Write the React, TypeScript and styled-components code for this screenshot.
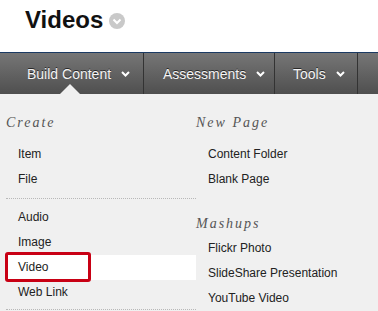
import styled, { createGlobalStyle } from 'styled-components';

const GlobalStyle = createGlobalStyle`
  body {
    margin: 0;
    background: #ffffff;
    font-family: 'Liberation Sans', Arial, sans-serif;
  }
`;

function Chevron({ color = '#ffffff' }: { color?: string }) {
  return (
    <svg width="9" height="6" viewBox="0 0 9 6">
      <polyline points="1,1 4.5,4.5 8,1" fill="none" stroke={color} strokeWidth="2" />
    </svg>
  );
}

function TitleMenuIcon() {
  return (
    <svg width="16" height="16" viewBox="0 0 16 16">
      <circle cx="8" cy="8" r="8" fill="#c9c9c9" />
      <polyline points="4.5,6.5 8,10 11.5,6.5" fill="none" stroke="#ffffff" strokeWidth="2" />
    </svg>
  );
}

const tabs = [
  { label: 'Build Content', width: 144, pad: 27, active: true },
  { label: 'Assessments', width: 131, pad: 19 },
  { label: 'Tools', width: 83, pad: 18 },
];

export default function App() {
  return (
    <Page>
      <GlobalStyle />
      <Header>
        <Title>Videos</Title>
        <TitleMenuIcon />
      </Header>
      <NavBar>
        {tabs.map((tab) => (
          <NavItem key={tab.label} $width={tab.width} $pad={tab.pad}>
            <NavLabel>{tab.label}</NavLabel>
            <Chevron />
            {tab.active && <ActiveCaret />}
          </NavItem>
        ))}
        <NavFiller />
      </NavBar>
      <MenuPanel>
        <Column $width={190}>
          <GroupHeading $top={19} $bottom={9}>Create</GroupHeading>
          <MenuItem>Item</MenuItem>
          <MenuItem>File</MenuItem>
          <Divider />
          <MenuItem>Audio</MenuItem>
          <MenuItem>Image</MenuItem>
          <MenuItem $selected>Video</MenuItem>
          <MenuItem>Web Link</MenuItem>
          <Divider $top={4} />
        </Column>
        <Column>
          <GroupHeading $top={19} $bottom={9}>New Page</GroupHeading>
          <MenuItem>Content Folder</MenuItem>
          <MenuItem>Blank Page</MenuItem>
          <GroupHeading $top={22} $bottom={2}>Mashups</GroupHeading>
          <MenuItem>Flickr Photo</MenuItem>
          <MenuItem>SlideShare Presentation</MenuItem>
          <MenuItem>YouTube Video</MenuItem>
        </Column>
      </MenuPanel>
    </Page>
  );
}

const Page = styled.div`
  width: 378px;
  height: 311px;
  overflow: hidden;
`;

const Header = styled.div`
  display: flex;
  align-items: flex-start;
  gap: 6px;
  height: 52px;
  padding: 6px 0 0 25px;
  box-sizing: border-box;

  svg {
    margin-top: 7px;
  }
`;

const Title = styled.h1`
  margin: 0;
  font-size: 24px;
  line-height: 28px;
  font-weight: bold;
  color: #111111;
`;

const NavBar = styled.div`
  display: flex;
  height: 41px;
  border-top: 1px solid #1b3a63;
  background: linear-gradient(#767676, #4f4f4f);
`;

const NavItem = styled.div<{ $width: number; $pad: number }>`
  position: relative;
  display: flex;
  align-items: center;
  gap: 10px;
  width: ${(p) => p.$width}px;
  padding-left: ${(p) => p.$pad}px;
  box-sizing: border-box;
  border-right: 1px solid #333333;
  flex-shrink: 0;
`;

const NavLabel = styled.span`
  font-size: 14px;
  color: #f4f4f4;
  text-shadow: 0 -1px 0 #2a2a2a;
`;

const ActiveCaret = styled.span`
  position: absolute;
  left: 60px;
  bottom: 0;
  width: 0;
  height: 0;
  border-left: 10px solid transparent;
  border-right: 10px solid transparent;
  border-bottom: 10px solid #f0f0f0;
`;

const NavFiller = styled.div`
  flex: 1;
`;

const MenuPanel = styled.div`
  display: flex;
  height: 217px;
  padding-left: 6px;
  background: #f0f0f0;
`;

const Column = styled.div<{ $width?: number }>`
  display: flex;
  flex-direction: column;
  ${(p) => (p.$width ? `width: ${p.$width}px; flex-shrink: 0;` : 'flex: 1;')}
`;

const GroupHeading = styled.div<{ $top: number; $bottom: number }>`
  margin: ${(p) => p.$top}px 0 ${(p) => p.$bottom}px;
  font-family: 'Liberation Serif', Georgia, serif;
  font-style: italic;
  font-size: 14px;
  line-height: 20px;
  letter-spacing: 2px;
  color: #555555;
`;

const MenuItem = styled.div<{ $selected?: boolean }>`
  position: relative;
  height: 25px;
  padding-left: 12px;
  font-size: 12px;
  line-height: 25px;
  color: #222222;
  white-space: nowrap;
  background: ${(p) => (p.$selected ? '#ffffff' : 'transparent')};

  ${(p) =>
    p.$selected &&
    `
    &::after {
      content: '';
      position: absolute;
      top: -3px;
      left: -1px;
      width: 86px;
      height: 30px;
      box-sizing: border-box;
      border: 3px solid #c80014;
      border-radius: 3px;
    }
  `}
`;

const Divider = styled.div<{ $top?: number }>`
  margin: ${(p) => p.$top ?? 6}px 0 6px;
  border-top: 1px dotted #b8b8b8;
`;
